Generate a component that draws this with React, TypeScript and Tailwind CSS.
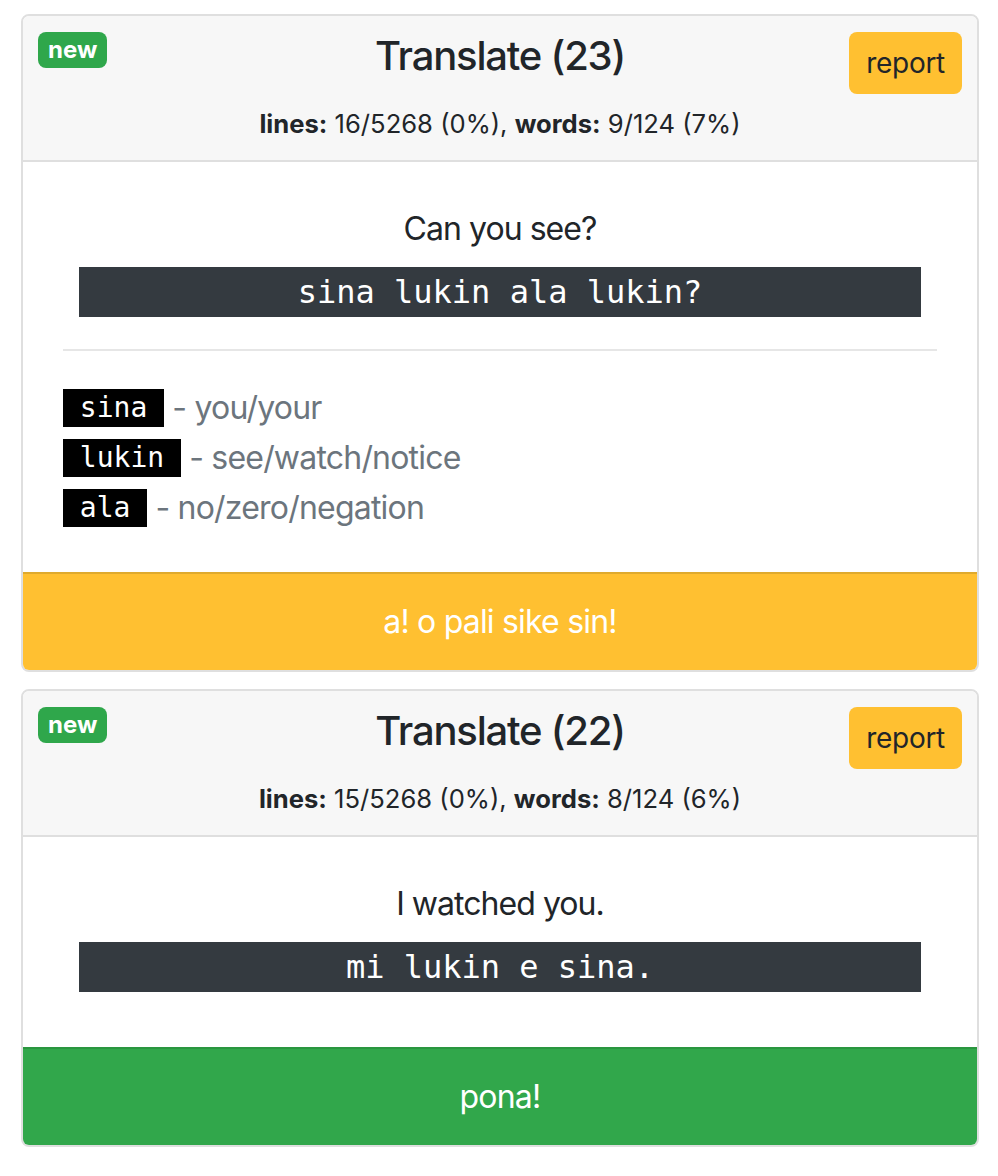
import React from 'react';

type Word = { word: string; meaning: string };

type Card = {
    count: number;
    lines: string;
    words: string;
    english: string;
    toki: string;
    vocab: Word[];
    result: 'warn' | 'ok';
    resultText: string;
};

const cards: Card[] = [
    {
        count: 23,
        lines: '16/5268 (0%)',
        words: '9/124 (7%)',
        english: 'Can you see?',
        toki: 'sina lukin ala lukin?',
        vocab: [
            { word: 'sina', meaning: 'you/your' },
            { word: 'lukin', meaning: 'see/watch/notice' },
            { word: 'ala', meaning: 'no/zero/negation' },
        ],
        result: 'warn',
        resultText: 'a! o pali sike sin!',
    },
    {
        count: 22,
        lines: '15/5268 (0%)',
        words: '8/124 (6%)',
        english: 'I watched you.',
        toki: 'mi lukin e sina.',
        vocab: [],
        result: 'ok',
        resultText: 'pona!',
    },
];

const mono = "font-['DejaVu_Sans_Mono',monospace]";

function TranslateCard({ card }: { card: Card }) {
    return (
        <div className="w-[958px] border-2 border-[#dfdfdf] rounded-[8px] overflow-hidden bg-white">
            <div className="relative bg-[#f7f7f7] border-b-2 border-[#dfdfdf] pt-[16px] pb-[17px] text-center text-[#212529]">
                <span className="absolute left-[15px] top-[16px] bg-[#2fa74b] text-white font-bold text-[24px] leading-[24px] px-[10px] py-[6px] rounded-[8px]">
                    new
                </span>
                <button className="absolute right-[15px] top-[16px] bg-[#ffc031] text-[#212529] text-[28px] leading-[42px] px-[17px] py-[10px] rounded-[8px] tracking-[-0.01em]">
                    report
                </button>
                <h5 className="text-[40px] leading-[48px] font-medium tracking-[-0.03em]">Translate ({card.count})</h5>
                <div className="mt-[25px] text-[25.6px] leading-[38px]">
                    <b>lines:</b> {card.lines}, <b>words:</b> {card.words}
                </div>
            </div>

            <div className="px-[40px] pt-[42px] pb-[39px] text-[#212529]">
                <p className="text-center text-[32px] leading-[50px] tracking-[-0.03em]">{card.english}</p>
                <div className={`mt-[13px] mb-[16px] mx-[16px] h-[50px] bg-[#343a40] text-white flex items-center justify-center text-[32px] ${mono}`}>
                    {card.toki}
                </div>
                {card.vocab.length > 0 && (
                    <>
                        <hr className="mt-[32px] mb-[32px] border-t-2 border-[#e6e6e6]" />
                        {card.vocab.map((v) => (
                            <div key={v.word} className="flex items-center h-[50px]">
                                <code className={`bg-black text-white h-[38px] leading-[38px] text-[28px] whitespace-pre ${mono}`}>
                                    {` ${v.word} `}
                                </code>
                                <span className="text-[32px] text-[#6c757d] whitespace-pre tracking-[-0.025em]">{` - ${v.meaning}`}</span>
                            </div>
                        ))}
                    </>
                )}
            </div>

            {card.result === 'warn' ? (
                <div className="bg-[#ffc031] border-t-2 border-[#dfaa2e] py-[24px] text-center text-white text-[32px] leading-[48px] tracking-[-0.025em]">
                    {card.resultText}
                </div>
            ) : (
                <div className="bg-[#31a74b] border-t-2 border-[#2a963f] py-[24px] text-center text-white text-[32px] leading-[48px] tracking-[-0.025em]">
                    {card.resultText}
                </div>
            )}
        </div>
    );
}

export default function App() {
    return (
        <div className="min-h-[1176px] bg-white pt-[14px] pl-[21px] font-['Inter',sans-serif]">
            <div className="flex flex-col gap-[17px]">
                {cards.map((c) => (
                    <TranslateCard key={c.count} card={c} />
                ))}
            </div>
        </div>
    );
}
